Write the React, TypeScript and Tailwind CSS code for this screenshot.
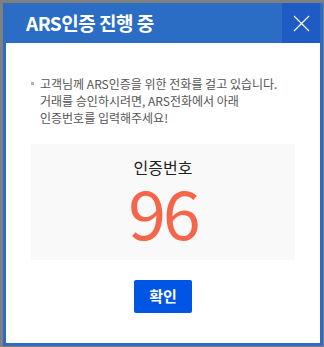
import React from "react";

const font = { fontFamily: '"Noto Sans CJK KR", "Noto Sans", sans-serif' };

export default function App() {
  return (
    <div className="h-[347px] w-[324px] overflow-hidden bg-[#7f7f7f] pl-[3px] pt-[3px]" style={font}>
      <div className="flex h-[343px] w-[320px] flex-col border-x-[3px] border-b-[3px] border-[#2b6cc4] bg-white">
        <div className="flex h-[40px] items-stretch bg-[#2b6cc4]">
          <h1 className="flex flex-1 items-center pl-[20px] text-[19px] font-semibold tracking-[-0.5px] text-white">
            ARS인증 진행 중
          </h1>
          <button className="flex w-[38px] items-center justify-center bg-[#1f5bc4]">
            <svg width="17" height="17" viewBox="0 0 17 17" fill="none" stroke="white" strokeWidth="1.2">
              <path d="M1 1L16 16M16 1L1 16" />
            </svg>
          </button>
        </div>

        <div className="flex flex-1 flex-col px-[25px] pt-[32px]">
          <div className="flex gap-[6px] text-[12px] leading-[17px] text-[#555]">
            <span className="mt-[7px] h-[3px] w-[3px] shrink-0 bg-[#9fb6d6]" />
            <p>
              고객님께 ARS인증을 위한 전화를 걸고 있습니다.
              <br />
              거래를 승인하시려면, ARS전화에서 아래
              <br />
              인증번호를 입력해주세요!
            </p>
          </div>

          <div className="mt-[18px] flex h-[116px] flex-col items-center bg-[#f9f9f9] pt-[13px]">
            <p className="text-[16px] leading-[20px] text-[#222]">인증번호</p>
            <p className="text-[68px] leading-[68px] tracking-[-3px] text-[#f4654a]">96</p>
          </div>

          <div className="mt-[20px] flex justify-center">
            <button className="h-[33px] w-[58px] rounded-[2px] bg-[#0055e5] text-[15px] font-bold text-white">
              확인
            </button>
          </div>
        </div>
      </div>
    </div>
  );
}
